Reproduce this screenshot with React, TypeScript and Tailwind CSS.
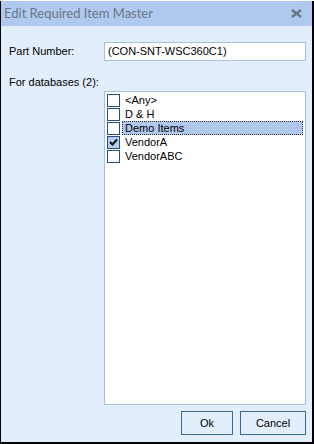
import React from "react";

const items = [
  { label: "<Any>", checked: false, selected: false },
  { label: "D & H", checked: false, selected: false },
  { label: "Demo Items", checked: false, selected: true },
  { label: "VendorA", checked: true, selected: false },
  { label: "VendorABC", checked: false, selected: false },
];

function Check({ checked }: { checked: boolean }) {
  return (
    <div
      className={
        "w-[13px] h-[13px] border border-[#24507e] shrink-0 flex items-center justify-center " +
        (checked ? "bg-[#b3cdef]" : "bg-white")
      }
    >
      {checked && (
        <svg width="11" height="11" viewBox="0 0 11 11">
          <path d="M2 5 L4.5 7.5 L9 2.5" stroke="#111" strokeWidth="2" fill="none" />
        </svg>
      )}
    </div>
  );
}

export default function App() {
  const font = { fontFamily: '"Liberation Sans", Arial, sans-serif' };
  return (
    <div className="w-[314px] h-[444px] bg-black">
      <div className="ml-[1px] mt-[1px] w-[311px] h-[441px] flex flex-col bg-[#e3eefd]" style={font}>
        <div className="h-[25px] bg-[#b0c9ee] flex items-center justify-between pl-[3px] pr-[10px]">
          <span
            className="text-[13px] text-[#6b7787] leading-none"
            style={{ fontFamily: 'Lato, "Noto Sans", sans-serif' }}
          >
            Edit Required Item Master
          </span>
          <svg width="11" height="9" viewBox="0 0 11 9">
            <path d="M1 1 L10 8 M10 1 L1 8" stroke="#6d7a8a" strokeWidth="2.6" />
          </svg>
        </div>
        <div className="flex-1 flex flex-col pl-[8px] pr-[6px] pt-[16px] pb-[7px]">
          <div className="flex items-center h-[19px]">
            <span className="w-[95px] text-[11px] text-black">Part Number:</span>
            <div className="flex-1 h-[19px] bg-white border border-[#a7c0e2] flex items-center pl-[3px] text-[11px] text-black">
              (CON-SNT-WSC360C1)
            </div>
          </div>
          <div className="mt-[13px] h-[16px] text-[11px] text-black leading-[16px]">For databases (2):</div>
          <div className="mt-[1px] ml-[95px] h-[314px] bg-white border border-[#a7c0e2] pt-[1px] pl-[2px] pr-[2px]">
            {items.map((it) => (
              <div key={it.label} className="flex items-center h-[14px]">
                <Check checked={it.checked} />
                <div
                  className={
                    "ml-[2px] flex-1 h-[14px] flex items-center pl-[2px] text-[11px] text-black " +
                    (it.selected ? "bg-[#b0c8ee] border border-dotted border-[#333]" : "border border-transparent")
                  }
                >
                  {it.label}
                </div>
              </div>
            ))}
          </div>
          <div className="mt-auto flex justify-end gap-[7px]">
            <button className="w-[52px] h-[24px] border border-[#3c679b] bg-[#e3eefd] text-[11px] text-black">Ok</button>
            <button className="w-[66px] h-[24px] border border-[#3c679b] bg-[#e3eefd] text-[11px] text-black">Cancel</button>
          </div>
        </div>
      </div>
    </div>
  );
}
